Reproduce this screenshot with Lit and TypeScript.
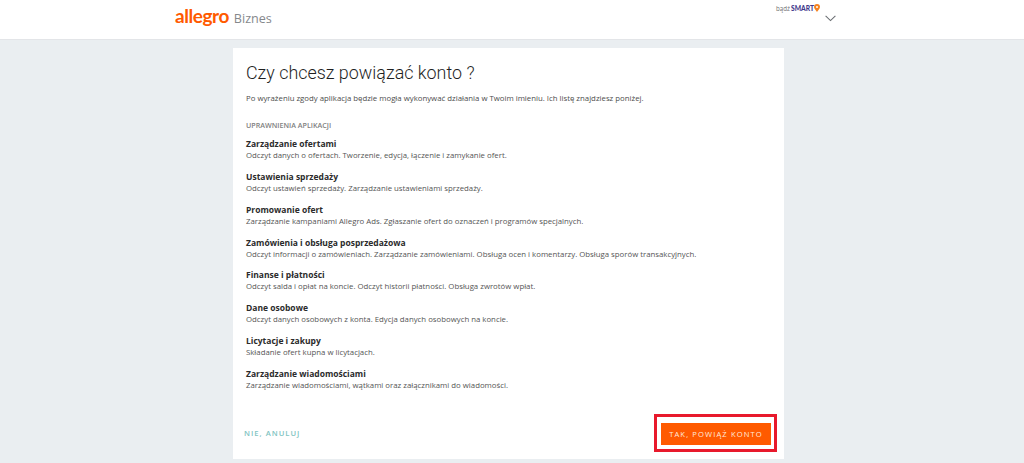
import { LitElement, html, css } from "lit";
import { customElement } from "lit/decorators.js";

const PERMS: [string, string][] = [
  ["Zarządzanie ofertami", "Odczyt danych o ofertach. Tworzenie, edycja, łączenie i zamykanie ofert."],
  ["Ustawienia sprzedaży", "Odczyt ustawień sprzedaży. Zarządzanie ustawieniami sprzedaży."],
  ["Promowanie ofert", "Zarządzanie kampaniami Allegro Ads. Zgłaszanie ofert do oznaczeń i programów specjalnych."],
  ["Zamówienia i obsługa posprzedażowa", "Odczyt informacji o zamówieniach. Zarządzanie zamówieniami. Obsługa ocen i komentarzy. Obsługa sporów transakcyjnych."],
  ["Finanse i płatności", "Odczyt salda i opłat na koncie. Odczyt historii płatności. Obsługa zwrotów wpłat."],
  ["Dane osobowe", "Odczyt danych osobowych z konta. Edycja danych osobowych na koncie."],
  ["Licytacje i zakupy", "Składanie ofert kupna w licytacjach."],
  ["Zarządzanie wiadomościami", "Zarządzanie wiadomościami, wątkami oraz załącznikami do wiadomości."],
];

@customElement("app-root")
export class AppRoot extends LitElement {
  static styles = css`
    :host { display: block; height: 463px; overflow: hidden; background: #eaeef1; font-family: "Open Sans", sans-serif; color: #333; }
    header { height: 39px; background: #fff; border-bottom: 1px solid #e3e5e8; display: flex; justify-content: space-between; padding: 0 188px 0 175px; }
    .brand { display: flex; align-items: baseline; gap: 5px; padding-top: 5px; height: 22px; }
    .logo { font-family: "Lato", sans-serif; font-weight: 700; font-size: 19px; letter-spacing: -0.45px; color: #ff5a00; line-height: 22px; }
    .biz { font-size: 12.6px; color: #85888c; line-height: 22px; }
    .smart { display: flex; flex-direction: column; align-items: flex-end; padding-top: 3px; }
    .smart-line { display: flex; align-items: center; gap: 0; height: 10px; margin-right: 16px; }
    .badz { font-size: 6.2px; color: #707070; }
    .sm { font-family: "Lato", sans-serif; font-size: 6.7px; font-weight: 900; color: #3f3a8c; margin-left: 1px; }
    .chev { margin-top: 2px; display: block; }
    .card { width: 551px; height: 411px; box-sizing: border-box; margin: 8px 0 0 233px; background: #fff; padding: 12px 13px 0; display: flex; flex-direction: column; }
    h1 { margin: 0; font-family: "Roboto", sans-serif; font-weight: 300; font-size: 17.9px; line-height: 26px; color: #1f1f1f; }
    .intro { margin: 5px 0 0; font-size: 7.8px; line-height: 14px; color: #4d4d4d; }
    .label { margin: 14px 0 0; font-size: 7.15px; line-height: 12px; font-weight: 600; color: #808080; }
    .perm { height: 32.86px; }
    .perms { margin-top: 6px; }
    .perm b { display: block; font-size: 8.5px; line-height: 13px; font-weight: 700; color: #2b2b2b; }
    .perm span { display: block; font-size: 7.8px; line-height: 11px; color: #555; }
    .actions { margin-top: auto; display: flex; justify-content: space-between; align-items: center; padding-bottom: 7px; }
    .cancel { margin-left: -2px; font-size: 7.6px; font-weight: 600; letter-spacing: 1.02px; color: #7fc4c2; }
    .focus { border: 3px solid #e8192c; padding: 6px 3px 4px 4px; margin-right: -6px; display: flex; }
    .cta { background: #ff5a00; color: #ffe9dc; font-size: 7.6px; font-weight: 400; letter-spacing: 1.12px; height: 22px; width: 110px; display: flex; align-items: center; justify-content: center; }
  `;

  render() {
    return html`
      <header>
        <div class="brand"><span class="logo">allegro</span><span class="biz">Biznes</span></div>
        <div class="smart">
          <div class="smart-line">
            <span class="badz">bądź</span><span class="sm">SMART</span>
            <svg width="6" height="8" viewBox="0 0 6 8"><path d="M3 0a3 3 0 0 1 3 3c0 2-2 3-3 5C2 6 0 5 0 3a3 3 0 0 1 3-3z" fill="#f58220"/><circle cx="3" cy="3" r="1" fill="#fff"/></svg>
          </div>
          <svg class="chev" width="11" height="7" viewBox="0 0 11 7"><path d="M.6.8 5.5 5.6 10.4.8" fill="none" stroke="#6b6f73" stroke-width="1.1"/></svg>
        </div>
      </header>
      <main class="card">
        <h1>Czy chcesz powiązać konto ?</h1>
        <p class="intro">Po wyrażeniu zgody aplikacja będzie mogła wykonywać działania w Twoim imieniu. Ich listę znajdziesz poniżej.</p>
        <div class="label">UPRAWNIENIA APLIKACJI</div>
        <div class="perms">
          ${PERMS.map(([t, d]) => html`<div class="perm"><b>${t}</b><span>${d}</span></div>`)}
        </div>
        <div class="actions">
          <span class="cancel">NIE, ANULUJ</span>
          <div class="focus"><div class="cta">TAK, POWIĄŻ KONTO</div></div>
        </div>
      </main>
    `;
  }
}
